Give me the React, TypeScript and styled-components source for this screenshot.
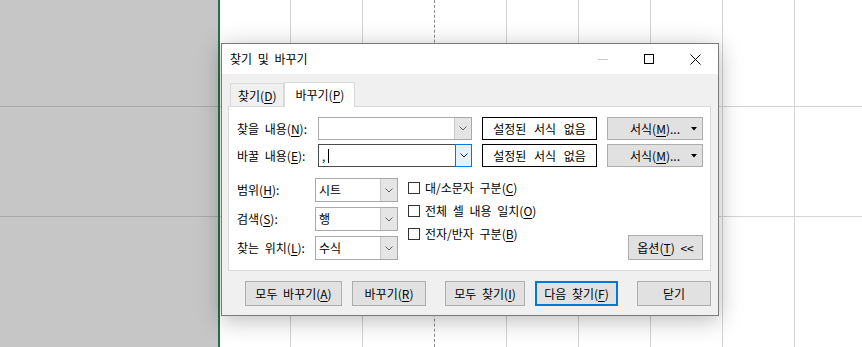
import React from 'react';
import styled, { createGlobalStyle } from 'styled-components';

const Global = createGlobalStyle`
  html, body { margin: 0; padding: 0; }
  body {
    width: 862px; height: 347px; overflow: hidden; background: #fff;
    font-family: "Noto Sans CJK KR", "Noto Sans", sans-serif;
    font-size: 12px; color: #000;
    word-spacing: 3px;
  }
  u { text-decoration-thickness: 1px; text-underline-offset: 2px; }
`;

const Sheet = styled.div`
  position: relative;
  width: 862px;
  height: 347px;
  display: flex;
  overflow: hidden;
  background: #fff;
`;

const GrayPane = styled.div`
  width: 218px;
  flex: none;
  background: #c6c6c6;
  display: flex;
  flex-direction: column;
`;

const GrayRow = styled.div<{ $h?: number }>`
  box-sizing: border-box;
  height: ${(p) => (p.$h ? `${p.$h}px` : 'auto')};
  flex: ${(p) => (p.$h ? 'none' : '1')};
  border-bottom: ${(p) => (p.$h ? '1px solid #a9a9a9' : 'none')};
`;

const GreenLine = styled.div`
  width: 2px;
  flex: none;
  background: #217346;
`;

const Cells = styled.div`
  flex: 1;
  min-width: 0;
  display: grid;
  grid-template-columns: 71px repeat(8, 72px);
  grid-template-rows: 107px 110px 1fr;
`;

const Cell = styled.div<{ $dashed?: boolean; $last?: boolean }>`
  box-sizing: border-box;
  border-right: ${(p) => (p.$dashed ? '1px dashed #8a8a8a' : '1px solid #d4d4d4')};
  border-bottom: ${(p) => (p.$last ? 'none' : '1px solid #d4d4d4')};
`;

const Dialog = styled.div`
  position: absolute;
  left: 221px;
  top: 43px;
  width: 498px;
  height: 273px;
  box-sizing: border-box;
  border: 1px solid #7a7a7a;
  background: #f0f0f0;
  display: flex;
  flex-direction: column;
  box-shadow: 0 4px 22px rgba(0, 0, 0, 0.28);
`;

const TitleBar = styled.div`
  height: 30px;
  flex: none;
  background: #fff;
  display: flex;
  align-items: center;
`;

const Title = styled.div`
  padding-left: 8px;
  font-size: 12px;
  line-height: 16px;
`;

const Controls = styled.div`
  margin-left: auto;
  display: flex;
  height: 100%;
`;

const CtrlButton = styled.div`
  width: 46px;
  height: 30px;
  display: flex;
  align-items: center;
  justify-content: center;
`;

const Body = styled.div`
  flex: 1;
  display: flex;
  flex-direction: column;
  padding: 8px 7px 0 6px;
`;

const TabStrip = styled.div`
  display: flex;
  align-items: flex-end;
  padding-left: 2px;
  height: 24px;
`;

const Tab = styled.div<{ $active?: boolean }>`
  box-sizing: border-box;
  height: ${(p) => (p.$active ? '25px' : '23px')};
  margin-bottom: ${(p) => (p.$active ? '-1px' : '0')};
  padding: 0 ${(p) => (p.$active ? '10px' : '7px')};
  border: 1px solid #d9d9d9;
  border-bottom: none;
  background: ${(p) => (p.$active ? '#fff' : '#f0f0f0')};
  position: relative;
  z-index: ${(p) => (p.$active ? 1 : 0)};
  display: flex;
  align-items: center;
  font-size: 12px;
  line-height: 16px;
  padding-top: ${(p) => (p.$active ? '0' : '1px')};
`;

const Panel = styled.div`
  border: 1px solid #d9d9d9;
  background: #fff;
  padding: 10px 7px 10px 8px;
  display: flex;
  flex-direction: column;
`;

const FieldRow = styled.div<{ $mt?: number }>`
  display: flex;
  align-items: center;
  height: 23px;
  margin-top: ${(p) => p.$mt ?? 0}px;
`;

const Label = styled.div<{ $w: number }>`
  width: ${(p) => p.$w}px;
  flex: none;
  font-size: 12px;
  line-height: 16px;
  white-space: nowrap;
`;

const Combo = styled.div<{ $w: number; $h: number; $focus?: boolean }>`
  box-sizing: border-box;
  width: ${(p) => p.$w}px;
  height: ${(p) => p.$h}px;
  flex: none;
  border: 1px solid ${(p) => (p.$focus ? '#4a4a4a' : '#a9a9a9')};
  background: #fff;
  display: flex;
  align-items: center;
`;

const ComboText = styled.div`
  flex: 1;
  padding-left: 3px;
  font-size: 12px;
  line-height: 16px;
  display: flex;
  align-items: center;
  white-space: nowrap;
`;

const Caret = styled.span`
  display: inline-block;
  width: 1px;
  height: 14px;
  background: #000;
  margin-left: 3px;
`;

const DropBtn = styled.div<{ $focus?: boolean }>`
  box-sizing: border-box;
  width: 17px;
  align-self: stretch;
  margin: ${(p) => (p.$focus ? '-1px -1px -1px 0' : '0')};
  border: ${(p) => (p.$focus ? '1px solid #0078d7' : 'none')};
  border-left: 1px solid ${(p) => (p.$focus ? '#0078d7' : '#c8c8c8')};
  background: ${(p) => (p.$focus ? '#e5f1fb' : '#e5e5e5')};
  display: flex;
  align-items: center;
  justify-content: center;
`;

const FormatBox = styled.div`
  box-sizing: border-box;
  width: 115px;
  height: 23px;
  flex: none;
  margin-left: 10px;
  border: 1px solid #000;
  background: #fff;
  display: flex;
  align-items: center;
  justify-content: center;
  font-size: 12px;
  line-height: 16px;
  word-spacing: 5px;
`;

const Button = styled.div<{ $w: number; $h?: number; $default?: boolean }>`
  box-sizing: border-box;
  width: ${(p) => p.$w}px;
  height: ${(p) => p.$h ?? 25}px;
  flex: none;
  background: #e1e1e1;
  border: ${(p) => (p.$default ? '2px solid #0078d7' : '1px solid #adadad')};
  display: flex;
  align-items: center;
  justify-content: center;
  font-size: 12px;
  line-height: 16px;
  white-space: nowrap;
`;

const FormatButton = styled(Button)`
  margin-left: 10px;
  justify-content: space-between;
  padding: 0 0 0 16px;
`;

const FormatButtonText = styled.span`
  flex: 1;
  text-align: center;
`;

const ArrowSlot = styled.span`
  width: 16px;
  display: flex;
  align-items: center;
  justify-content: center;
`;

const Lower = styled.div`
  display: flex;
  margin-top: 9px;
`;

const OptionGrid = styled.div`
  display: grid;
  grid-template-columns: 78px 83px;
  grid-auto-rows: 24px;
  row-gap: 5px;
  padding-top: 2px;
  align-items: center;
`;

const CheckCol = styled.div`
  display: flex;
  flex-direction: column;
  margin-left: 10px;
`;

const CheckRow = styled.div`
  height: 23px;
  display: flex;
  align-items: center;
  gap: 5px;
  font-size: 12px;
  line-height: 16px;
  white-space: nowrap;
`;

const CheckBox = styled.span`
  box-sizing: border-box;
  width: 12px;
  height: 12px;
  border: 1px solid #333;
  background: #fff;
`;

const OptionsButton = styled(Button)`
  margin-left: auto;
  align-self: flex-end;
`;

const ButtonRow = styled.div`
  display: flex;
  justify-content: flex-end;
  gap: 19px;
  margin-top: 10px;
`;

const ButtonGroup = styled.div`
  display: flex;
  gap: 10px;
`;

const Chevron = ({ color = '#606060' }: { color?: string }) => (
  <svg width="8" height="5" viewBox="0 0 8 5">
    <polyline points="0.5,0.5 4,4 7.5,0.5" fill="none" stroke={color} strokeWidth="1" />
  </svg>
);

const TriDown = () => (
  <svg width="6" height="4" viewBox="0 0 6 4">
    <polygon points="0,0 6,0 3,3.5" fill="#000" />
  </svg>
);

const MinIcon = () => (
  <svg width="10" height="10" viewBox="0 0 10 10">
    <line x1="0" y1="5.5" x2="10" y2="5.5" stroke="#c8c8c8" strokeWidth="1" />
  </svg>
);

const MaxIcon = () => (
  <svg width="10" height="10" viewBox="0 0 10 10">
    <rect x="0.5" y="0.5" width="9" height="9" fill="none" stroke="#000" strokeWidth="1" />
  </svg>
);

const CloseIcon = () => (
  <svg width="11" height="11" viewBox="0 0 11 11">
    <line x1="0.5" y1="0.5" x2="10.5" y2="10.5" stroke="#000" strokeWidth="1" />
    <line x1="10.5" y1="0.5" x2="0.5" y2="10.5" stroke="#000" strokeWidth="1" />
  </svg>
);

const Mn = ({ label, k, tail = '' }: { label: string; k: string; tail?: string }) => (
  <>
    {label}(<u>{k}</u>){tail}
  </>
);

const rowHeights = [0, 1, 2];
const cols = [0, 1, 2, 3, 4, 5, 6, 7, 8];

export default function App() {
  return (
    <>
      <Global />
      <Sheet>
        <GrayPane>
          <GrayRow $h={107} />
          <GrayRow $h={110} />
          <GrayRow />
        </GrayPane>
        <GreenLine />
        <Cells>
          {rowHeights.map((r) =>
            cols.map((c) => <Cell key={`${r}-${c}`} $dashed={c === 2} $last={r === 2} />)
          )}
        </Cells>

        <Dialog>
          <TitleBar>
            <Title>찾기 및 바꾸기</Title>
            <Controls>
              <CtrlButton>
                <MinIcon />
              </CtrlButton>
              <CtrlButton>
                <MaxIcon />
              </CtrlButton>
              <CtrlButton>
                <CloseIcon />
              </CtrlButton>
            </Controls>
          </TitleBar>
          <Body>
            <TabStrip>
              <Tab>
                <Mn label="찾기" k="D" />
              </Tab>
              <Tab $active>
                <Mn label="바꾸기" k="P" />
              </Tab>
            </TabStrip>
            <Panel>
              <FieldRow>
                <Label $w={81}>
                  <Mn label="찾을 내용" k="N" tail=":" />
                </Label>
                <Combo $w={154} $h={23}>
                  <ComboText />
                  <DropBtn>
                    <Chevron />
                  </DropBtn>
                </Combo>
                <FormatBox>설정된 서식 없음</FormatBox>
                <FormatButton $w={96} $h={23}>
                  <FormatButtonText>
                    <Mn label="서식" k="M" tail="..." />
                  </FormatButtonText>
                  <ArrowSlot>
                    <TriDown />
                  </ArrowSlot>
                </FormatButton>
              </FieldRow>
              <FieldRow $mt={4}>
                <Label $w={81}>
                  <Mn label="바꿀 내용" k="E" tail=":" />
                </Label>
                <Combo $w={154} $h={23} $focus>
                  <ComboText>
                    ,<Caret />
                  </ComboText>
                  <DropBtn $focus>
                    <Chevron color="#222" />
                  </DropBtn>
                </Combo>
                <FormatBox>설정된 서식 없음</FormatBox>
                <FormatButton $w={96} $h={23}>
                  <FormatButtonText>
                    <Mn label="서식" k="M" tail="..." />
                  </FormatButtonText>
                  <ArrowSlot>
                    <TriDown />
                  </ArrowSlot>
                </FormatButton>
              </FieldRow>
              <Lower>
                <OptionGrid>
                  <Label $w={78}>
                    <Mn label="범위" k="H" tail=":" />
                  </Label>
                  <Combo $w={83} $h={24}>
                    <ComboText>시트</ComboText>
                    <DropBtn>
                      <Chevron />
                    </DropBtn>
                  </Combo>
                  <Label $w={78}>
                    <Mn label="검색" k="S" tail=":" />
                  </Label>
                  <Combo $w={83} $h={24}>
                    <ComboText>행</ComboText>
                    <DropBtn>
                      <Chevron />
                    </DropBtn>
                  </Combo>
                  <Label $w={78}>
                    <Mn label="찾는 위치" k="L" tail=":" />
                  </Label>
                  <Combo $w={83} $h={24}>
                    <ComboText>수식</ComboText>
                    <DropBtn>
                      <Chevron />
                    </DropBtn>
                  </Combo>
                </OptionGrid>
                <CheckCol>
                  <CheckRow>
                    <CheckBox />
                    <span>
                      <Mn label="대/소문자 구분" k="C" />
                    </span>
                  </CheckRow>
                  <CheckRow>
                    <CheckBox />
                    <span>
                      <Mn label="전체 셀 내용 일치" k="O" />
                    </span>
                  </CheckRow>
                  <CheckRow>
                    <CheckBox />
                    <span>
                      <Mn label="전자/반자 구분" k="B" />
                    </span>
                  </CheckRow>
                </CheckCol>
                <OptionsButton $w={75}>
                  <Mn label="옵션" k="T" tail=" <<" />
                </OptionsButton>
              </Lower>
            </Panel>
            <ButtonRow>
              <ButtonGroup>
                <Button $w={97}>
                  <Mn label="모두 바꾸기" k="A" />
                </Button>
                <Button $w={74}>
                  <Mn label="바꾸기" k="R" />
                </Button>
              </ButtonGroup>
              <ButtonGroup>
                <Button $w={80}>
                  <Mn label="모두 찾기" k="I" />
                </Button>
                <Button $w={83} $default>
                  <Mn label="다음 찾기" k="F" />
                </Button>
              </ButtonGroup>
              <ButtonGroup>
                <Button $w={74}>닫기</Button>
              </ButtonGroup>
            </ButtonRow>
          </Body>
        </Dialog>
      </Sheet>
    </>
  );
}
